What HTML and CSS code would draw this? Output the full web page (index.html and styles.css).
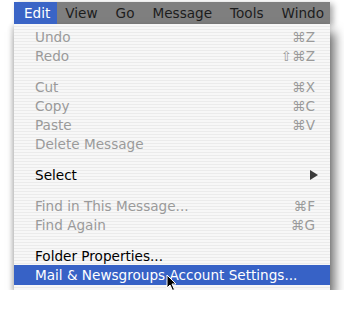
FILE: index.html
```html
<!DOCTYPE html>
<html lang="en">
<head>
  <meta charset="UTF-8" />
  <title>Edit menu</title>
  <link rel="stylesheet" href="styles.css">
</head>
<body>
  <div class="screen">
    <div class="menu-bar">
      <span class="bar-item open">Edit</span>
      <span class="bar-item">View</span>
      <span class="bar-item">Go</span>
      <span class="bar-item">Message</span>
      <span class="bar-item">Tools</span>
      <span class="bar-item">Windo</span>
    </div>

    <div class="menu">
      <div class="row off"><span>Undo</span><span class="key">&#8984;Z</span></div>
      <div class="row off"><span>Redo</span><span class="key">&#8679;&#8984;Z</span></div>
      <div class="sep"></div>
      <div class="row off"><span>Cut</span><span class="key">&#8984;X</span></div>
      <div class="row off"><span>Copy</span><span class="key">&#8984;C</span></div>
      <div class="row off"><span>Paste</span><span class="key">&#8984;V</span></div>
      <div class="row off"><span>Delete Message</span></div>
      <div class="sep"></div>
      <div class="row"><span>Select</span><span class="arrow"></span></div>
      <div class="sep"></div>
      <div class="row off"><span>Find in This Message...</span><span class="key">&#8984;F</span></div>
      <div class="row off"><span>Find Again</span><span class="key">&#8984;G</span></div>
      <div class="sep"></div>
      <div class="row"><span>Folder Properties...</span></div>
      <div class="row hot"><span>Mail &amp; Newsgroups Account Settings...</span></div>
    </div>

    <svg class="cursor" width="12" height="18" viewBox="0 0 12 18">
      <path d="M1 1 L1 14 L4 11 L6.5 16.5 L8.5 15.5 L6 10 L10 10 Z" fill="#000" stroke="#fff" stroke-width="1"/>
    </svg>
  </div>
</body>
</html>
```

FILE: styles.css
```css
body {
  margin: 0;
  padding: 0;
  background: #fff;
  font-family: 'DejaVu Sans', sans-serif;
  font-size: 13.6px;
}

.screen {
  position: relative;
  width: 316px;
  padding: 2px 0 0 14px;
}

.menu-bar {
  display: flex;
  height: 22px;
  align-items: center;
  background: #7f7f7f;
  color: #1c1c1c;
  box-shadow: 3px 2px 6px rgba(0, 0, 0, 0.35);
  white-space: nowrap;
  overflow: hidden;
}

.bar-item {
  padding: 0 10px 0 8px;
  line-height: 22px;
}

.bar-item.open {
  background: #3a64c6;
  color: #fff;
  padding: 0 7px 0 10px;
}

.menu {
  padding: 3px 0 5px;
  background: repeating-linear-gradient(#f7f7f7 0 2px, #ebebeb 2px 3px);
  box-shadow: 5px 8px 10px rgba(0, 0, 0, 0.55), -2px 2px 5px rgba(0, 0, 0, 0.2);
}

.row {
  display: flex;
  justify-content: space-between;
  align-items: center;
  height: 19px;
  padding: 0 15px 0 21px;
  color: #000;
  white-space: nowrap;
}

.row.off {
  color: #9a9a9a;
}

.row.hot {
  height: 20px;
  background: #3762c6;
  color: #fff;
}

.arrow {
  width: 0;
  height: 0;
  border-top: 5px solid transparent;
  border-bottom: 5px solid transparent;
  border-left: 8px solid #3a3a3a;
  margin-right: -3px;
}

.sep {
  height: 12px;
}

.cursor {
  position: absolute;
  left: 166px;
  top: 274px;
}
```
